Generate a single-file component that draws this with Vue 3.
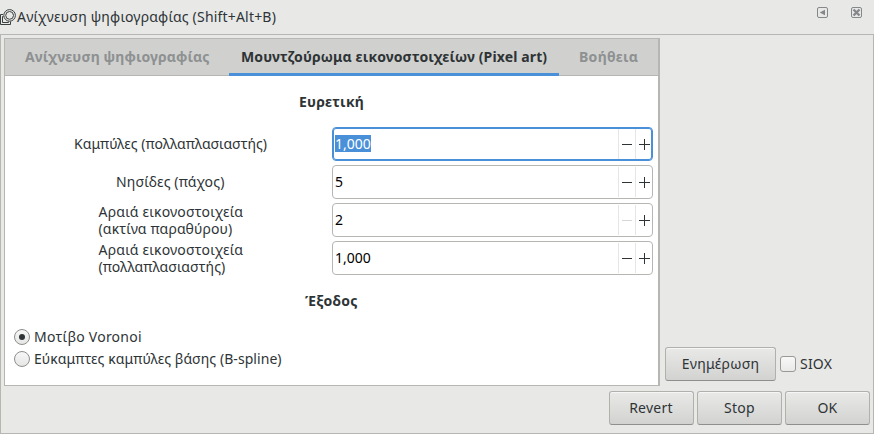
<script setup>
import { ref } from 'vue'

const tabs = [
  { id: 'trace', label: 'Ανίχνευση ψηφιογραφίας' },
  { id: 'pixel', label: 'Μουντζούρωμα εικονοστοιχείων (Pixel art)' },
  { id: 'help', label: 'Βοήθεια' },
]
const activeTab = ref('pixel')

const fields = [
  { id: 'curves', lines: ['Καμπύλες (πολλαπλασιαστής)'], value: '1,000', focused: true },
  { id: 'islands', lines: ['Νησίδες (πάχος)'], value: '5' },
  { id: 'radius', lines: ['Αραιά εικονοστοιχεία', '(ακτίνα παραθύρου)'], value: '2', atMin: true },
  { id: 'sparse', lines: ['Αραιά εικονοστοιχεία', '(πολλαπλασιαστής)'], value: '1,000' },
]

const outputs = [
  { id: 'voronoi', label: 'Μοτίβο Voronoi' },
  { id: 'bspline', label: 'Εύκαμπτες καμπύλες βάσης (B-spline)' },
]
const output = ref('voronoi')
const actions = ['Revert', 'Stop', 'OK']
</script>

<template>
  <div class="dialog">
    <header class="titlebar">
      <svg class="app-icon" width="17" height="18" viewBox="0 0 17 18" fill="none" stroke="#3a3f41">
        <path d="M3 5.5H.5v10h10V12.5" />
        <path d="M3.5 7.5h-1v6h6v-1" />
        <circle cx="9.6" cy="6.4" r="5.8" fill="#e8e8e7" />
        <circle cx="9.6" cy="6.4" r="3.9" />
      </svg>
      <span class="title">Ανίχνευση ψηφιογραφίας (Shift+Alt+B)</span>
      <svg class="dock" width="11" height="11" viewBox="0 0 11 11">
        <rect x=".5" y=".5" width="10" height="10" rx="1.5" fill="none" stroke="#85888a" />
        <path d="M8 2.8v5.4L2.7 5.5z" fill="#85888a" />
      </svg>
      <svg class="dock" width="11" height="11" viewBox="0 0 11 11">
        <rect x=".5" y=".5" width="10" height="10" rx="1.5" fill="none" stroke="#85888a" />
        <path d="M2.5 2.5l6 6M8.5 2.5l-6 6" stroke="#85888a" stroke-width="2.4" />
      </svg>
    </header>

    <main class="frame">
      <div class="content">
        <section class="notebook">
          <nav class="tabs">
            <div v-for="t in tabs" :key="t.id" class="tab" :class="[t.id, { active: t.id === activeTab }]" @click="activeTab = t.id">
              <span>{{ t.label }}</span>
            </div>
          </nav>
          <div class="page">
            <h2 class="heuristic">Ευρετική</h2>
            <div class="fields">
              <div v-for="f in fields" :key="f.id" class="field">
                <div class="label-cell" :class="{ single: f.lines.length === 1 }">
                  <div class="label" :class="f.id">
                    <div v-for="(line, i) in f.lines" :key="i" class="line" :class="'line' + i">{{ line }}</div>
                  </div>
                </div>
                <div class="spin" :class="{ focused: f.focused }">
                  <div class="value"><span>{{ f.value }}</span></div>
                  <svg class="step" :class="{ disabled: f.atMin }" width="17" height="32" viewBox="0 0 17 32">
                    <path class="divider" d="M.5 1v30" />
                    <path class="sign" d="M4 16.5h10" />
                  </svg>
                  <svg class="step" width="17" height="32" viewBox="0 0 17 32">
                    <path class="divider" d="M.5 1v30" />
                    <path class="sign" d="M4 16.5h11M9.5 11v11" />
                  </svg>
                </div>
              </div>
            </div>
            <h2 class="output">Έξοδος</h2>
            <div class="radios">
              <div v-for="o in outputs" :key="o.id" class="radio" :class="o.id" @click="output = o.id">
                <i class="knob" :class="{ on: output === o.id }"></i><span>{{ o.label }}</span>
              </div>
            </div>
          </div>
        </section>
        <aside class="side">
          <button class="btn update"><span>Ενημέρωση</span></button>
          <div class="check"><i class="box"></i><span>SIOX</span></div>
        </aside>
      </div>
      <footer class="actions">
        <button v-for="a in actions" :key="a" class="btn" :class="a.toLowerCase()"><span>{{ a }}</span></button>
      </footer>
    </main>
  </div>
</template>

<style>
body { background: #e8e8e7; overflow: hidden; }
</style>

<style scoped>
* { box-sizing: border-box; }
.dialog { width: 874px; height: 434px; display: flex; flex-direction: column; background: #e8e8e7; color: #2e3436; font: 14px/17px "Noto Sans", "Open Sans", sans-serif; white-space: nowrap; }
.titlebar { height: 34px; display: flex; align-items: flex-start; padding-right: 12px; }
.app-icon { margin-top: 9px; flex: none; }
.title { margin-top: 8px; flex: 1; letter-spacing: .19px; }
.dock { margin-top: 7px; flex: none; }
.dock + .dock { margin-left: 23px; }
.frame { height: 400px; border: 1px solid #b6b6b3; padding: 3px; display: flex; flex-direction: column; }
.content { height: 348px; display: flex; }
.notebook { width: 656px; border: 1px solid #b6b6b3; border-right-width: 2px; background: #fff; flex: none; }
.tabs { height: 37px; display: flex; background: #d0d0ce; border-bottom: 1px solid #b6b6b3; }
.tab { height: 37px; padding-top: 9px; padding-left: 12px; font-weight: 700; color: #8e9192; letter-spacing: .13px; flex: none; }
.tab.trace { width: 224px; padding-left: 20px; }
.tab.pixel { width: 330px; }
.tab.help { padding-left: 20px; letter-spacing: .3px; }
.tab.active { color: #2e3436; border-bottom: 3px solid #4a90d9; }
.page { height: 309px; padding: 17px 5px 0 9px; }
h2 { margin: 0; font-size: 14px; line-height: 17px; font-weight: 700; letter-spacing: .2px; }
.heuristic { padding-left: 285px; }
.output { margin-top: 17px; padding-left: 291px; }
.fields { margin-top: 17px; display: flex; flex-direction: column; gap: 4px; }
.field { height: 34px; display: flex; }
.label-cell { width: 318px; padding-right: 4px; display: flex; align-items: center; justify-content: center; }
.label-cell.single { padding-bottom: 2px; }
.label { width: 145px; }
.label.curves { width: 194px; }
.label.islands { width: 110px; letter-spacing: .14px; }
.label.radius .line0, .label.sparse .line0 { letter-spacing: .19px; }
.label.radius .line1 { letter-spacing: .11px; }
.label.sparse .line1 { letter-spacing: .06px; }
.spin { width: 321px; height: 34px; border: 1px solid #b6b6b3; border-radius: 4px; display: flex; background: #fff; }
.spin.focused { border-color: #4a90d9; box-shadow: inset 0 0 0 1px #4a90d9; }
.value { flex: 1; padding: 7px 0 0 2px; color: #000; }
.value span { display: inline-block; height: 17px; }
.focused .value span { background: #4a90d9; color: #fff; }
.step { flex: none; fill: none; }
.divider { stroke: #e6e6e6; }
.sign { stroke: #2e3436; }
.disabled .sign { stroke: #d5d6d6; }
.radios { margin-top: 19px; display: flex; flex-direction: column; gap: 5px; }
.radio { height: 17px; display: flex; align-items: center; }
.radio.voronoi { letter-spacing: .23px; }
.radio.bspline { letter-spacing: .06px; }
.knob { width: 16px; height: 16px; border: 1px solid #8e8e8b; border-radius: 50%; background: linear-gradient(#f7f7f7, #e6e6e5); margin-right: 4px; display: flex; align-items: center; justify-content: center; flex: none; }
.knob.on::after { content: ""; width: 6px; height: 6px; border-radius: 50%; background: #2e3436; }
.side { flex: 1; display: flex; align-items: flex-end; padding: 0 0 5px 5px; }
.btn { height: 34px; width: 85px; padding: 0 0 2px; border: 1px solid #b0b0ad; border-bottom-color: #8f8f8c; border-radius: 3px; background: linear-gradient(#e9e9e8, #d2d2d0); box-shadow: inset 0 1px #f6f6f6; font: inherit; color: inherit; text-align: center; letter-spacing: .25px; }
.btn.revert { padding-right: 1px; }
.btn.update { width: 111px; }
.check { display: flex; align-items: center; margin-left: 4px; height: 34px; letter-spacing: .2px; }
.check span { margin-bottom: 2px; }
.box { width: 16px; height: 16px; border: 1px solid #999996; border-radius: 3px; background: linear-gradient(#f8f8f8, #e9e9e8); margin-right: 4px; }
.actions { margin-top: 5px; height: 34px; display: flex; justify-content: flex-end; gap: 3px; }
</style>
